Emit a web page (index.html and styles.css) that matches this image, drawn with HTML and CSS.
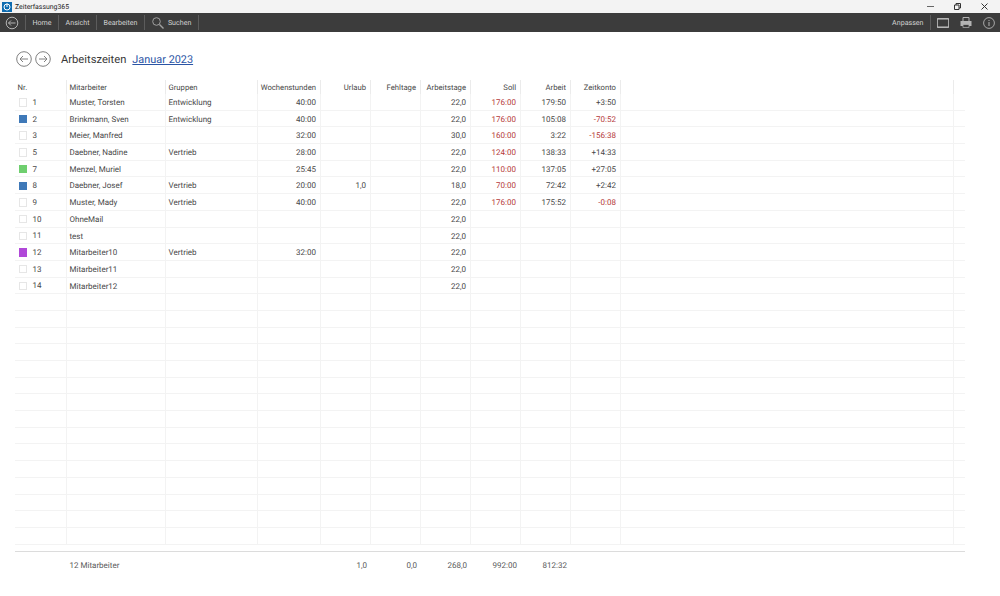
FILE: index.html
```html
<!DOCTYPE html>
<html lang="de">
<head>
<meta charset="utf-8">
<title>Zeiterfassung365</title>
<link rel="stylesheet" href="styles.css">
</head>
<body>
<header class="titlebar">
  <div class="app-title">
    <svg class="app-logo" width="10" height="10" viewBox="0 0 10 10"><rect width="10" height="10" fill="#0f6cb0"/><circle cx="5" cy="5" r="3" fill="none" stroke="#fff" stroke-width="1"/><path d="M5 1.500V5" stroke="#fff" stroke-width="1"/></svg>
    <span>Zeiterfassung365</span>
  </div>
  <div class="win-controls">
    <svg width="7" height="7" viewBox="0 0 7 7"><path d="M0 3.500h7" stroke="#666" stroke-width="1"/></svg>
    <svg width="7" height="7" viewBox="0 0 7 7"><path d="M.5 2h4.500v4.500H.5zM2 2V.5h4.500V5H5" fill="none" stroke="#333" stroke-width="1"/></svg>
    <svg width="7" height="7" viewBox="0 0 7 7"><path d="M.5.5l6 6M6.500.5l-6 6" stroke="#333" stroke-width="1"/></svg>
  </div>
</header>
<nav class="toolbar">
  <div class="tool-group">
    <div class="tool tool-back">
      <svg width="14" height="14" viewBox="0 0 14 14"><circle cx="7" cy="7" r="5.800" fill="none" stroke="#b4b4b4"/><path d="M10.500 7h-7M6 4.500L3.500 7 6 9.500" fill="none" stroke="#b4b4b4"/></svg>
    </div>
    <div class="tool">Home</div>
    <div class="tool">Ansicht</div>
    <div class="tool">Bearbeiten</div>
    <div class="tool tool-search">
      <svg width="12" height="12" viewBox="0 0 12 12"><circle cx="4.500" cy="4.500" r="3.800" fill="none" stroke="#a0a0a0"/><path d="M7.500 7.500l4 4" stroke="#a0a0a0" stroke-width="1.400"/></svg>
      <span>Suchen</span>
    </div>
  </div>
  <div class="tool-group">
    <div class="tool tool-right">Anpassen</div>
    <div class="tool-icons">
      <svg width="12" height="10" viewBox="0 0 12 10"><path d="M.5.5h11v9H.5z" fill="none" stroke="#a8a8a8"/><path d="M0 1h12M0 9h12" stroke="#c4c4c4"/></svg>
      <svg width="12" height="11" viewBox="0 0 12 11"><path d="M3 4V.5h6V4" fill="none" stroke="#b4b4b4"/><rect x=".5" y="4" width="11" height="5" fill="#b4b4b4"/><rect x="3" y="7.500" width="6" height="3" fill="#3c3c3c" stroke="#b4b4b4" stroke-width=".7"/></svg>
      <svg width="12" height="12" viewBox="0 0 12 12"><circle cx="6" cy="6" r="5.400" fill="none" stroke="#a8a8a8"/><path d="M6 5v4M6 3v1" stroke="#b4b4b4"/></svg>
    </div>
  </div>
</nav>
<main class="page">
  <div class="heading">
    <svg width="16" height="16" viewBox="0 0 16 16"><circle cx="8" cy="8" r="7.300" fill="none" stroke="#808080"/><path d="M12 8H4M7 5L4 8l3 3" fill="none" stroke="#808080"/></svg>
    <svg width="16" height="16" viewBox="0 0 16 16"><circle cx="8" cy="8" r="7.300" fill="none" stroke="#808080"/><path d="M4 8h8M9 5l3 3-3 3" fill="none" stroke="#808080"/></svg>
    <h1 class="title">Arbeitszeiten</h1>
    <a class="month" href="#">Januar 2023</a>
  </div>
  <div class="grid">
    <div class="row head">
      <span class="c">Nr.</span><span class="c">Mitarbeiter</span><span class="c">Gruppen</span><span class="c r">Wochenstunden</span><span class="c r">Urlaub</span><span class="c r">Fehltage</span><span class="c r">Arbeitstage</span><span class="c r">Soll</span><span class="c r">Arbeit</span><span class="c r">Zeitkonto</span><span class="c"></span><span class="c"></span>
    </div>
    <div class="body">
      <div class="row"><span class="c nr"><i class="sw"></i>1</span><span class="c">Muster, Torsten</span><span class="c">Entwicklung</span><span class="c r">40:00</span><span class="c r"></span><span class="c r"></span><span class="c r">22,0</span><span class="c r red">176:00</span><span class="c r">179:50</span><span class="c r">+3:50</span><span class="c"></span><span class="c"></span></div>
      <div class="row"><span class="c nr"><i class="sw blue"></i>2</span><span class="c">Brinkmann, Sven</span><span class="c">Entwicklung</span><span class="c r">40:00</span><span class="c r"></span><span class="c r"></span><span class="c r">22,0</span><span class="c r red">176:00</span><span class="c r">105:08</span><span class="c r red">-70:52</span><span class="c"></span><span class="c"></span></div>
      <div class="row"><span class="c nr"><i class="sw"></i>3</span><span class="c">Meier, Manfred</span><span class="c"></span><span class="c r">32:00</span><span class="c r"></span><span class="c r"></span><span class="c r">30,0</span><span class="c r red">160:00</span><span class="c r">3:22</span><span class="c r red">-156:38</span><span class="c"></span><span class="c"></span></div>
      <div class="row"><span class="c nr"><i class="sw"></i>5</span><span class="c">Daebner, Nadine</span><span class="c">Vertrieb</span><span class="c r">28:00</span><span class="c r"></span><span class="c r"></span><span class="c r">22,0</span><span class="c r red">124:00</span><span class="c r">138:33</span><span class="c r">+14:33</span><span class="c"></span><span class="c"></span></div>
      <div class="row"><span class="c nr"><i class="sw green"></i>7</span><span class="c">Menzel, Muriel</span><span class="c"></span><span class="c r">25:45</span><span class="c r"></span><span class="c r"></span><span class="c r">22,0</span><span class="c r red">110:00</span><span class="c r">137:05</span><span class="c r">+27:05</span><span class="c"></span><span class="c"></span></div>
      <div class="row"><span class="c nr"><i class="sw blue"></i>8</span><span class="c">Daebner, Josef</span><span class="c">Vertrieb</span><span class="c r">20:00</span><span class="c r">1,0</span><span class="c r"></span><span class="c r">18,0</span><span class="c r red">70:00</span><span class="c r">72:42</span><span class="c r">+2:42</span><span class="c"></span><span class="c"></span></div>
      <div class="row"><span class="c nr"><i class="sw"></i>9</span><span class="c">Muster, Mady</span><span class="c">Vertrieb</span><span class="c r">40:00</span><span class="c r"></span><span class="c r"></span><span class="c r">22,0</span><span class="c r red">176:00</span><span class="c r">175:52</span><span class="c r red">-0:08</span><span class="c"></span><span class="c"></span></div>
      <div class="row"><span class="c nr"><i class="sw"></i>10</span><span class="c">OhneMail</span><span class="c"></span><span class="c r"></span><span class="c r"></span><span class="c r"></span><span class="c r">22,0</span><span class="c r"></span><span class="c r"></span><span class="c r"></span><span class="c"></span><span class="c"></span></div>
      <div class="row"><span class="c nr"><i class="sw"></i>11</span><span class="c">test</span><span class="c"></span><span class="c r"></span><span class="c r"></span><span class="c r"></span><span class="c r">22,0</span><span class="c r"></span><span class="c r"></span><span class="c r"></span><span class="c"></span><span class="c"></span></div>
      <div class="row"><span class="c nr"><i class="sw purple"></i>12</span><span class="c">Mitarbeiter10</span><span class="c">Vertrieb</span><span class="c r">32:00</span><span class="c r"></span><span class="c r"></span><span class="c r">22,0</span><span class="c r"></span><span class="c r"></span><span class="c r"></span><span class="c"></span><span class="c"></span></div>
      <div class="row"><span class="c nr"><i class="sw"></i>13</span><span class="c">Mitarbeiter11</span><span class="c"></span><span class="c r"></span><span class="c r"></span><span class="c r"></span><span class="c r">22,0</span><span class="c r"></span><span class="c r"></span><span class="c r"></span><span class="c"></span><span class="c"></span></div>
      <div class="row"><span class="c nr"><i class="sw"></i>14</span><span class="c">Mitarbeiter12</span><span class="c"></span><span class="c r"></span><span class="c r"></span><span class="c r"></span><span class="c r">22,0</span><span class="c r"></span><span class="c r"></span><span class="c r"></span><span class="c"></span><span class="c"></span></div>
      <div class="row"><span class="c"></span><span class="c"></span><span class="c"></span><span class="c"></span><span class="c"></span><span class="c"></span><span class="c"></span><span class="c"></span><span class="c"></span><span class="c"></span><span class="c"></span><span class="c"></span></div>
      <div class="row"><span class="c"></span><span class="c"></span><span class="c"></span><span class="c"></span><span class="c"></span><span class="c"></span><span class="c"></span><span class="c"></span><span class="c"></span><span class="c"></span><span class="c"></span><span class="c"></span></div>
      <div class="row"><span class="c"></span><span class="c"></span><span class="c"></span><span class="c"></span><span class="c"></span><span class="c"></span><span class="c"></span><span class="c"></span><span class="c"></span><span class="c"></span><span class="c"></span><span class="c"></span></div>
      <div class="row"><span class="c"></span><span class="c"></span><span class="c"></span><span class="c"></span><span class="c"></span><span class="c"></span><span class="c"></span><span class="c"></span><span class="c"></span><span class="c"></span><span class="c"></span><span class="c"></span></div>
      <div class="row"><span class="c"></span><span class="c"></span><span class="c"></span><span class="c"></span><span class="c"></span><span class="c"></span><span class="c"></span><span class="c"></span><span class="c"></span><span class="c"></span><span class="c"></span><span class="c"></span></div>
      <div class="row"><span class="c"></span><span class="c"></span><span class="c"></span><span class="c"></span><span class="c"></span><span class="c"></span><span class="c"></span><span class="c"></span><span class="c"></span><span class="c"></span><span class="c"></span><span class="c"></span></div>
      <div class="row"><span class="c"></span><span class="c"></span><span class="c"></span><span class="c"></span><span class="c"></span><span class="c"></span><span class="c"></span><span class="c"></span><span class="c"></span><span class="c"></span><span class="c"></span><span class="c"></span></div>
      <div class="row"><span class="c"></span><span class="c"></span><span class="c"></span><span class="c"></span><span class="c"></span><span class="c"></span><span class="c"></span><span class="c"></span><span class="c"></span><span class="c"></span><span class="c"></span><span class="c"></span></div>
      <div class="row"><span class="c"></span><span class="c"></span><span class="c"></span><span class="c"></span><span class="c"></span><span class="c"></span><span class="c"></span><span class="c"></span><span class="c"></span><span class="c"></span><span class="c"></span><span class="c"></span></div>
      <div class="row"><span class="c"></span><span class="c"></span><span class="c"></span><span class="c"></span><span class="c"></span><span class="c"></span><span class="c"></span><span class="c"></span><span class="c"></span><span class="c"></span><span class="c"></span><span class="c"></span></div>
      <div class="row"><span class="c"></span><span class="c"></span><span class="c"></span><span class="c"></span><span class="c"></span><span class="c"></span><span class="c"></span><span class="c"></span><span class="c"></span><span class="c"></span><span class="c"></span><span class="c"></span></div>
      <div class="row"><span class="c"></span><span class="c"></span><span class="c"></span><span class="c"></span><span class="c"></span><span class="c"></span><span class="c"></span><span class="c"></span><span class="c"></span><span class="c"></span><span class="c"></span><span class="c"></span></div>
      <div class="row"><span class="c"></span><span class="c"></span><span class="c"></span><span class="c"></span><span class="c"></span><span class="c"></span><span class="c"></span><span class="c"></span><span class="c"></span><span class="c"></span><span class="c"></span><span class="c"></span></div>
      <div class="row"><span class="c"></span><span class="c"></span><span class="c"></span><span class="c"></span><span class="c"></span><span class="c"></span><span class="c"></span><span class="c"></span><span class="c"></span><span class="c"></span><span class="c"></span><span class="c"></span></div>
      <div class="row"><span class="c"></span><span class="c"></span><span class="c"></span><span class="c"></span><span class="c"></span><span class="c"></span><span class="c"></span><span class="c"></span><span class="c"></span><span class="c"></span><span class="c"></span><span class="c"></span></div>
    </div>
    <div class="row foot">
      <span class="c"></span><span class="c">12 Mitarbeiter</span><span class="c"></span><span class="c"></span><span class="c r">1,0</span><span class="c r">0,0</span><span class="c r">268,0</span><span class="c r">992:00</span><span class="c r">812:32</span><span class="c"></span><span class="c"></span><span class="c"></span>
    </div>
  </div>
</main>
</body>
</html>
```
FILE: styles.css
```css
* { box-sizing: border-box; }
html, body { margin: 0; height: 100%; }
body {
  width: 1000px;
  height: 596px;
  overflow: hidden;
  background: #fff;
  color: #484848;
  font-family: Roboto, "Open Sans", "Liberation Sans", sans-serif;
  font-size: 8px;
  text-rendering: geometricPrecision;
}
.titlebar {
  height: 13px;
  background: #f3f3f3;
  display: flex;
  justify-content: space-between;
  align-items: center;
  color: #222;
  font-size: 6.900px;
}
.app-title { display: flex; align-items: center; gap: 3px; padding-left: 2px; }
.app-logo { display: block; }
.win-controls { display: flex; gap: 20px; padding-right: 12px; }
.win-controls svg { display: block; }
.toolbar {
  height: 19px;
  background: #3c3c3c;
  color: #d2d2d2;
  font-size: 7.100px;
  display: flex;
  justify-content: space-between;
  align-items: stretch;
}
.tool-group { display: flex; align-items: center; }
.tool {
  display: flex;
  align-items: center;
  height: 15px;
  padding: 0 6.500px;
  border-right: 1px solid #5c5c5c;
}
.tool-back { padding: 0 5px; width: 26px; }
.tool-search { gap: 4px; padding: 0 6.500px 0 7px; }
.tool-right { padding-right: 6.500px; }
.tool-icons { display: flex; align-items: center; gap: 11px; padding: 0 5px 0 6px; }
.tool-icons svg { display: block; }
.page { padding: 0 35px 0 15px; }
.heading {
  height: 48px;
  padding: 19px 0 0 1px;
  display: flex;
  align-items: flex-start;
  gap: 3px;
}
.heading svg { display: block; }
.title {
  margin: 0 0 0 7px;
  font-size: 11.200px;
  font-weight: 400;
  line-height: 18px;
  color: #383838;
}
.month {
  margin-left: 3px;
  font-size: 10.900px;
  line-height: 18px;
  color: #2b55a5;
}
.grid { width: 950px; }
.row {
  display: grid;
  grid-template-columns: 52px 99px 92px 63px 50px 50px 50px 50px 50px 50px 333px 12px;
  height: 16.700px;
  border-bottom: 1px solid #f3f3f3;
  line-height: 17px;
}
.body { height: 456.500px; overflow: hidden; }
.c {
  padding: 0 4px 0 2.500px;
  border-right: 1px solid #f3f3f3;
  white-space: nowrap;
  overflow: hidden;
}
.c:last-child { border-right: 0; }
.r { text-align: right; }
.head { height: 14px; border-bottom: 0; line-height: 15px; font-size: 7.700px; }
.head .c { border-right-color: #ebebeb; }
.head .c:last-child { border-right: 0; }
.nr { display: flex; align-items: center; gap: 5.500px; padding: 1px 4px 0 3.500px; }
.sw {
  width: 8.500px;
  height: 8.500px;
  flex: none;
  border: 1px solid #e6e6e6;
  background: #fff;
}
.blue { background: #3f79b8; border-color: #3f79b8; }
.green { background: #6fcf6f; border-color: #6fcf6f; }
.purple { background: #b048d8; border-color: #b048d8; }
.red { color: #b53a3a; }
.foot {
  height: 28px;
  border-top: 1px solid #dcdcdc;
  border-bottom: 0;
  line-height: 28px;
  color: #5a5a5a;
}
.foot .c { border-right: 0; }
```
